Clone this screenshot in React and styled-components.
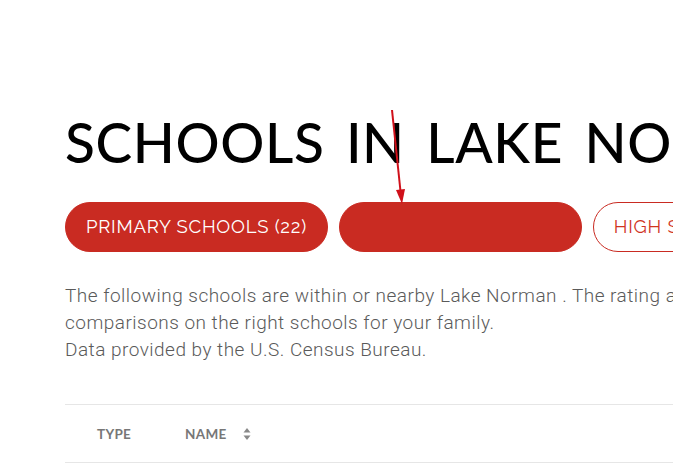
import React from "react";
import styled, { createGlobalStyle } from "styled-components";

const Global = createGlobalStyle`
  html, body { margin: 0; padding: 0; background: #fff; overflow: hidden; }
  body { width: 673px; height: 475px; }
`;

const Page = styled.div`
  position: relative;
  width: 1200px;
  padding: 109px 0 0 65px;
  box-sizing: border-box;
`;

const Title = styled.h1`
  margin: 0;
  font-family: "Lato", sans-serif;
  font-weight: 500;
  font-size: 55px;
  line-height: 66px;
  letter-spacing: 0.6px;
  word-spacing: 7px;
  color: #000;
  white-space: nowrap;
`;

const Tabs = styled.div`
  display: flex;
  gap: 11px;
  margin-top: 27px;
`;

const Tab = styled.button`
  height: 50px;
  box-sizing: border-box;
  padding: 0 20px 2px;
  border-radius: 25px;
  border: 1px solid #c92b22;
  background: ${(p) => (p.$active ? "#c92b22" : "#fff")};
  color: ${(p) => (p.$active ? "#fff" : "#d0351f")};
  font-family: "Raleway", "Open Sans", sans-serif;
  font-size: 18.5px;
  font-weight: 400;
  letter-spacing: 0.75px;
  white-space: nowrap;
  width: ${(p) => (p.$w ? p.$w + "px" : "auto")};
  flex: none;
`;

const Intro = styled.p`
  margin: 30px 0 0;
  font-family: "Roboto", sans-serif;
  font-weight: 300;
  font-size: 19px;
  line-height: 27px;
  letter-spacing: 0.48px;
  color: #5a5a5a;
  white-space: nowrap;
`;

const Table = styled.div`
  margin-top: 41px;
  border-top: 1px solid #e6e6e6;
  border-bottom: 1px solid #e6e6e6;
  height: 57px;
  display: flex;
  align-items: center;
  padding-left: 32px;
`;

const Head = styled.div`
  display: flex;
  align-items: center;
  gap: 16px;
  width: ${(p) => p.$w}px;
  font-family: "Lato", sans-serif;
  font-weight: 700;
  font-size: 13.5px;
  letter-spacing: 0.3px;
  color: #777;
`;

const Arrow = styled.svg`
  position: absolute;
  left: 0;
  top: 0;
  pointer-events: none;
`;

const SortIcon = () => (
  <svg width="8" height="14" viewBox="0 0 8 14">
    <path d="M4 1 L7.5 5.5 H0.5 Z" fill="#888" />
    <path d="M4 13 L7.5 8.5 H0.5 Z" fill="#888" />
  </svg>
);

export default function App() {
  return (
    <>
      <Global />
      <Page>
        <Title>SCHOOLS IN LAKE NORMAN</Title>
        <Tabs>
          <Tab $active>PRIMARY SCHOOLS (22)</Tab>
          <Tab $active $w={243}></Tab>
          <Tab>HIGH SCHOOLS (6)</Tab>
        </Tabs>
        <Intro>
          The following schools are within or nearby Lake Norman . The rating and reviews can help you make informed
          <br />
          comparisons on the right schools for your family.
          <br />
          Data provided by the U.S. Census Bureau.
        </Intro>
        <Table>
          <Head $w={88}>TYPE</Head>
          <Head $w={120}>
            NAME <SortIcon />
          </Head>
        </Table>
        <Arrow width="673" height="475">
          <line x1="392" y1="110" x2="401" y2="196" stroke="#d0101a" strokeWidth="2" />
          <path d="M396 190 L402 204 L405 189 Z" fill="#d0101a" />
        </Arrow>
      </Page>
    </>
  );
}
